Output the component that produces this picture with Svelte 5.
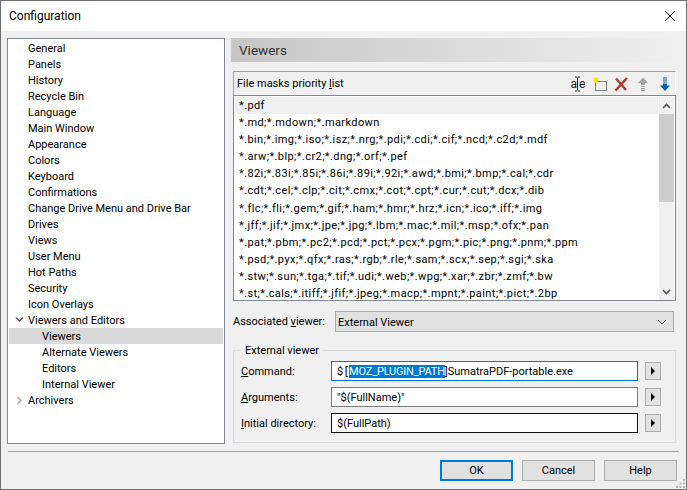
<script lang="ts">
	const treeItems = [
		{ label: 'General' },
		{ label: 'Panels' },
		{ label: 'History' },
		{ label: 'Recycle Bin' },
		{ label: 'Language' },
		{ label: 'Main Window' },
		{ label: 'Appearance' },
		{ label: 'Colors' },
		{ label: 'Keyboard' },
		{ label: 'Confirmations' },
		{ label: 'Change Drive Menu and Drive Bar' },
		{ label: 'Drives' },
		{ label: 'Views' },
		{ label: 'User Menu' },
		{ label: 'Hot Paths' },
		{ label: 'Security' },
		{ label: 'Icon Overlays' },
		{ label: 'Viewers and Editors', toggle: 'open' },
		{ label: 'Viewers', child: true, selected: true },
		{ label: 'Alternate Viewers', child: true },
		{ label: 'Editors', child: true },
		{ label: 'Internal Viewer', child: true },
		{ label: 'Archivers', toggle: 'closed' }
	];

	const masks = [
		'*.pdf',
		'*.md;*.mdown;*.markdown',
		'*.bin;*.img;*.iso;*.isz;*.nrg;*.pdi;*.cdi;*.cif;*.ncd;*.c2d;*.mdf',
		'*.arw;*.blp;*.cr2;*.dng;*.orf;*.pef',
		'*.82i;*.83i;*.85i;*.86i;*.89i;*.92i;*.awd;*.bmi;*.bmp;*.cal;*.cdr',
		'*.cdt;*.cel;*.clp;*.cit;*.cmx;*.cot;*.cpt;*.cur;*.cut;*.dcx;*.dib',
		'*.flc;*.fli;*.gem;*.gif;*.ham;*.hmr;*.hrz;*.icn;*.ico;*.iff;*.img',
		'*.jff;*.jif;*.jmx;*.jpe;*.jpg;*.lbm;*.mac;*.mil;*.msp;*.ofx;*.pan',
		'*.pat;*.pbm;*.pc2;*.pcd;*.pct;*.pcx;*.pgm;*.pic;*.png;*.pnm;*.ppm',
		'*.psd;*.pyx;*.qfx;*.ras;*.rgb;*.rle;*.sam;*.scx;*.sep;*.sgi;*.ska',
		'*.stw;*.sun;*.tga;*.tif;*.udi;*.web;*.wpg;*.xar;*.zbr;*.zmf;*.bw',
		'*.st;*.cals;*.itiff;*.jfif;*.jpeg;*.macp;*.mpnt;*.paint;*.pict;*.2bp'
	];
</script>

<div class="window">
	<header class="titlebar">
		<span class="title">Configuration</span>
		<svg class="close" width="12" height="12" viewBox="0 0 12 12">
			<path d="M1 1l10 10M11 1L1 11" stroke="#111" stroke-width="1" fill="none" />
		</svg>
	</header>

	<div class="body">
		<nav class="tree">
			{#each treeItems as item}
				<div class="tree-row" class:selected={item.selected} class:child={item.child}>
					{#if item.toggle === 'open'}
						<svg class="toggle" width="9" height="7" viewBox="0 0 9 7">
							<path d="M1 1.500l3.500 3.500L8 1.500" stroke="#555" stroke-width="1.500" fill="none" />
						</svg>
					{:else if item.toggle === 'closed'}
						<svg class="toggle" width="9" height="9" viewBox="0 0 9 9">
							<path d="M2.500 1l3.500 3.500L2.500 8" stroke="#aaa" stroke-width="1.500" fill="none" />
						</svg>
					{/if}
					<span>{item.label}</span>
				</div>
			{/each}
		</nav>

		<main class="page">
			<h2 class="page-title">Viewers</h2>

			<section class="masks">
				<div class="masks-bar">
					<span>File masks priority <u>l</u>ist</span>
					<div class="tools">
						<svg width="16" height="16" viewBox="0 0 16 16">
							<path d="M8.500 1.500v13M6 1h2M9 1h2M6 15h2M9 15h2" stroke="#222" fill="none" />
							<text x="1.500" y="12" class="tool-text">a</text>
							<text x="10" y="12" class="tool-text">e</text>
						</svg>
						<svg width="16" height="16" viewBox="0 0 16 16">
							<rect x="4.500" y="5.500" width="11" height="9" fill="none" stroke="#111" stroke-dasharray="1 1" />
							<path d="M5 1v6M2 4h6M3 2l4 4M7 2L3 6" stroke="#f4e800" stroke-width="1.200" />
						</svg>
						<svg width="16" height="16" viewBox="0 0 16 16">
							<path d="M3 2.500l10 11.500M14 2L2.500 14.500" stroke="#b03a2e" stroke-width="2.400" fill="none" />
						</svg>
						<svg width="16" height="16" viewBox="0 0 16 16">
							<path d="M8 1.500l5 5.500h-3v2H6V7H3zM6 10h4v1H6zM6 12h4v1H6zM6 14h4v1H6z" fill="#a3a3a3" />
						</svg>
						<svg width="16" height="16" viewBox="0 0 16 16">
							<path d="M8 15l5-5.500h-3v-2H6v2H3zM6 5.500h4v1H6zM6 3.500h4v1H6zM6 1.500h4v1H6z" fill="#0b5cad" />
						</svg>
					</div>
				</div>

				<div class="masks-list">
					<div class="masks-rows">
						{#each masks as mask, i}
							<div class="mask-row" class:current={i === 0}>{mask}</div>
						{/each}
					</div>
					<div class="scrollbar">
						<span class="scroll-btn">
							<svg width="9" height="6" viewBox="0 0 9 6"><path d="M1 5l3.500-3.500L8 5" stroke="#555" stroke-width="1.600" fill="none" /></svg>
						</span>
						<div class="scroll-track"><div class="scroll-thumb"></div></div>
						<span class="scroll-btn">
							<svg width="9" height="6" viewBox="0 0 9 6"><path d="M1 1l3.500 3.500L8 1" stroke="#555" stroke-width="1.600" fill="none" /></svg>
						</span>
					</div>
				</div>
			</section>

			<div class="assoc">
				<span class="assoc-label">Associated <u>v</u>iewer:</span>
				<div class="combo">
					<span>External Viewer</span>
					<svg width="10" height="6" viewBox="0 0 10 6"><path d="M1 1l4 4 4-4" stroke="#555" fill="none" /></svg>
				</div>
			</div>

			<fieldset class="group">
				<legend>External viewer</legend>
				<div class="field">
					<span class="field-label"><u>C</u>ommand:</span>
					<div class="input focused"><span class="prefix">$[</span><mark>MOZ_PLUGIN_PATH</mark>]SumatraPDF-portable.exe</div>
					<button class="arrow" aria-label="Command options"></button>
				</div>
				<div class="field">
					<span class="field-label"><u>A</u>rguments:</span>
					<div class="input">"$(FullName)"</div>
					<button class="arrow" aria-label="Arguments options"></button>
				</div>
				<div class="field">
					<span class="field-label"><u>I</u>nitial directory:</span>
					<div class="input dark">$(FullPath)</div>
					<button class="arrow" aria-label="Directory options"></button>
				</div>
			</fieldset>
		</main>
	</div>

	<footer class="footer">
		<button class="btn primary">OK</button>
		<button class="btn">Cancel</button>
		<button class="btn">Help</button>
	</footer>
	<svg class="grip" width="10" height="10" viewBox="0 0 10 10">
		<path d="M7 0h2v2H7zM3.500 3.500h2v2h-2zM7 3.500h2v2H7zM0 7h2v2H0zM3.500 7h2v2h-2zM7 7h2v2H7z" fill="#b5b5b5" />
	</svg>
</div>

<style>
	:global(body) {
		margin: 0;
		background: #f0f0f0;
	}

	.window {
		position: relative;
		box-sizing: border-box;
		width: 687px;
		height: 490px;
		display: flex;
		flex-direction: column;
		background: #f0f0f0;
		border: 1px solid #6f6f6f;
		font-family: Roboto, 'Liberation Sans', sans-serif;
		font-size: 11px;
		color: #000;
	}

	.titlebar {
		height: 30px;
		flex: none;
		display: flex;
		align-items: center;
		justify-content: space-between;
		padding: 0 10px 0 8px;
		background: #fff;
	}

	.title {
		font-size: 12px;
	}

	.body {
		display: flex;
		gap: 6px;
		padding: 7px 6px 0 6px;
		height: 405px;
		flex: none;
	}

	.tree {
		box-sizing: border-box;
		width: 218px;
		height: 406px;
		flex: none;
		padding: 1px;
		background: #fff;
		border: 1px solid #828790;
	}

	.tree-row {
		position: relative;
		height: 16px;
		line-height: 17px;
		padding-left: 19px;
		white-space: nowrap;
	}

	.tree-row.child {
		padding-left: 33px;
	}

	.tree-row.selected {
		background: #d9d9d9;
	}

	.toggle {
		position: absolute;
		left: 6px;
		top: 4px;
	}

	.page {
		flex: 1;
		min-width: 0;
	}

	.page-title {
		margin: 0 0 9px;
		height: 24px;
		line-height: 24px;
		padding-left: 8px;
		font-size: 13.500px;
		font-weight: 400;
		color: #333;
		background: linear-gradient(90deg, #c6c6c6, #f0f0f0);
	}

	.masks {
		margin-left: 2px;
		width: 443px;
	}

	.masks-bar {
		box-sizing: border-box;
		height: 24px;
		display: flex;
		align-items: center;
		justify-content: space-between;
		padding: 0 2px 0 3px;
		background: #f0f0f0;
		border: 1px solid #a0a0a0;
		border-bottom: 0;
		border-right: 1px solid #fff;
	}

	.tools {
		display: flex;
		gap: 6px;
	}

	.tool-text {
		font-size: 12px;
		fill: #222;
	}

	.masks-list {
		box-sizing: border-box;
		height: 206px;
		display: flex;
		padding: 1px 1px 0 1px;
		background: #fff;
		border: 1px solid #828790;
	}

	.masks-rows {
		flex: 1;
		min-width: 0;
		overflow: hidden;
		margin-right: 1px;
	}

	.mask-row {
		height: 17.100px;
		line-height: 17px;
		padding-left: 4px;
		letter-spacing: 0.400px;
		white-space: nowrap;
	}

	.mask-row.current {
		background: #f0f0f0;
	}

	.scrollbar {
		width: 15px;
		flex: none;
		display: flex;
		flex-direction: column;
		background: #f0f0f0;
	}

	.scroll-btn {
		height: 17px;
		flex: none;
		display: flex;
		align-items: center;
		justify-content: center;
	}

	.scroll-track {
		flex: 1;
	}

	.scroll-thumb {
		height: 88px;
		background: #cdcdcd;
	}

	.assoc {
		display: flex;
		align-items: center;
		margin: 10px 0 0 2px;
	}

	.assoc-label {
		width: 102px;
		flex: none;
	}

	.combo {
		box-sizing: border-box;
		width: 339px;
		height: 21px;
		display: flex;
		align-items: center;
		justify-content: space-between;
		padding: 1px 6px 0 2px;
		background: #e1e1e1;
		border: 1px solid #adadad;
	}

	.group {
		box-sizing: border-box;
		width: 443px;
		height: 101px;
		margin: 10px 0 0 2px;
		padding: 2px 13px 0 7px;
		border: 1px solid #dcdcdc;
	}

	.group legend {
		padding: 0 4px;
		margin-left: 0;
		line-height: 17px;
	}

	.field {
		display: flex;
		align-items: center;
		height: 20px;
		margin-bottom: 6px;
	}

	.field-label {
		width: 90px;
		flex: none;
	}

	.input {
		box-sizing: border-box;
		width: 307px;
		height: 20px;
		line-height: 19px;
		padding-left: 5px;
		background: #fff;
		border: 1px solid #7a7a7a;
		white-space: nowrap;
	}

	.input.focused {
		border-color: #0078d7;
	}

	.input.dark {
		border-color: #111;
	}

	.prefix {
		letter-spacing: 1.500px;
	}

	.input mark {
		letter-spacing: -0.200px;
		background: #0078d7;
		color: #fff;
	}

	.arrow {
		position: relative;
		box-sizing: border-box;
		width: 16px;
		height: 18px;
		margin-left: 7px;
		padding: 0;
		background: #e1e1e1;
		border: 1px solid #adadad;
	}

	.arrow::after {
		content: '';
		position: absolute;
		left: 5px;
		top: 4px;
		border-left: 4px solid #000;
		border-top: 4px solid transparent;
		border-bottom: 4px solid transparent;
	}

	.footer {
		flex: 1;
		display: flex;
		justify-content: flex-end;
		gap: 9px;
		margin: 8px 7px 0 7px;
		padding: 8px 2px 0 0;
		border-top: 1px solid #a0a0a0;
		box-sizing: border-box;
	}

	.btn {
		box-sizing: border-box;
		width: 73px;
		height: 21px;
		padding: 0;
		font: inherit;
		background: #e1e1e1;
		border: 1px solid #adadad;
	}

	.btn.primary {
		border: 2px solid #0078d7;
	}

	.grip {
		position: absolute;
		right: 0;
		bottom: 0;
	}
</style>
